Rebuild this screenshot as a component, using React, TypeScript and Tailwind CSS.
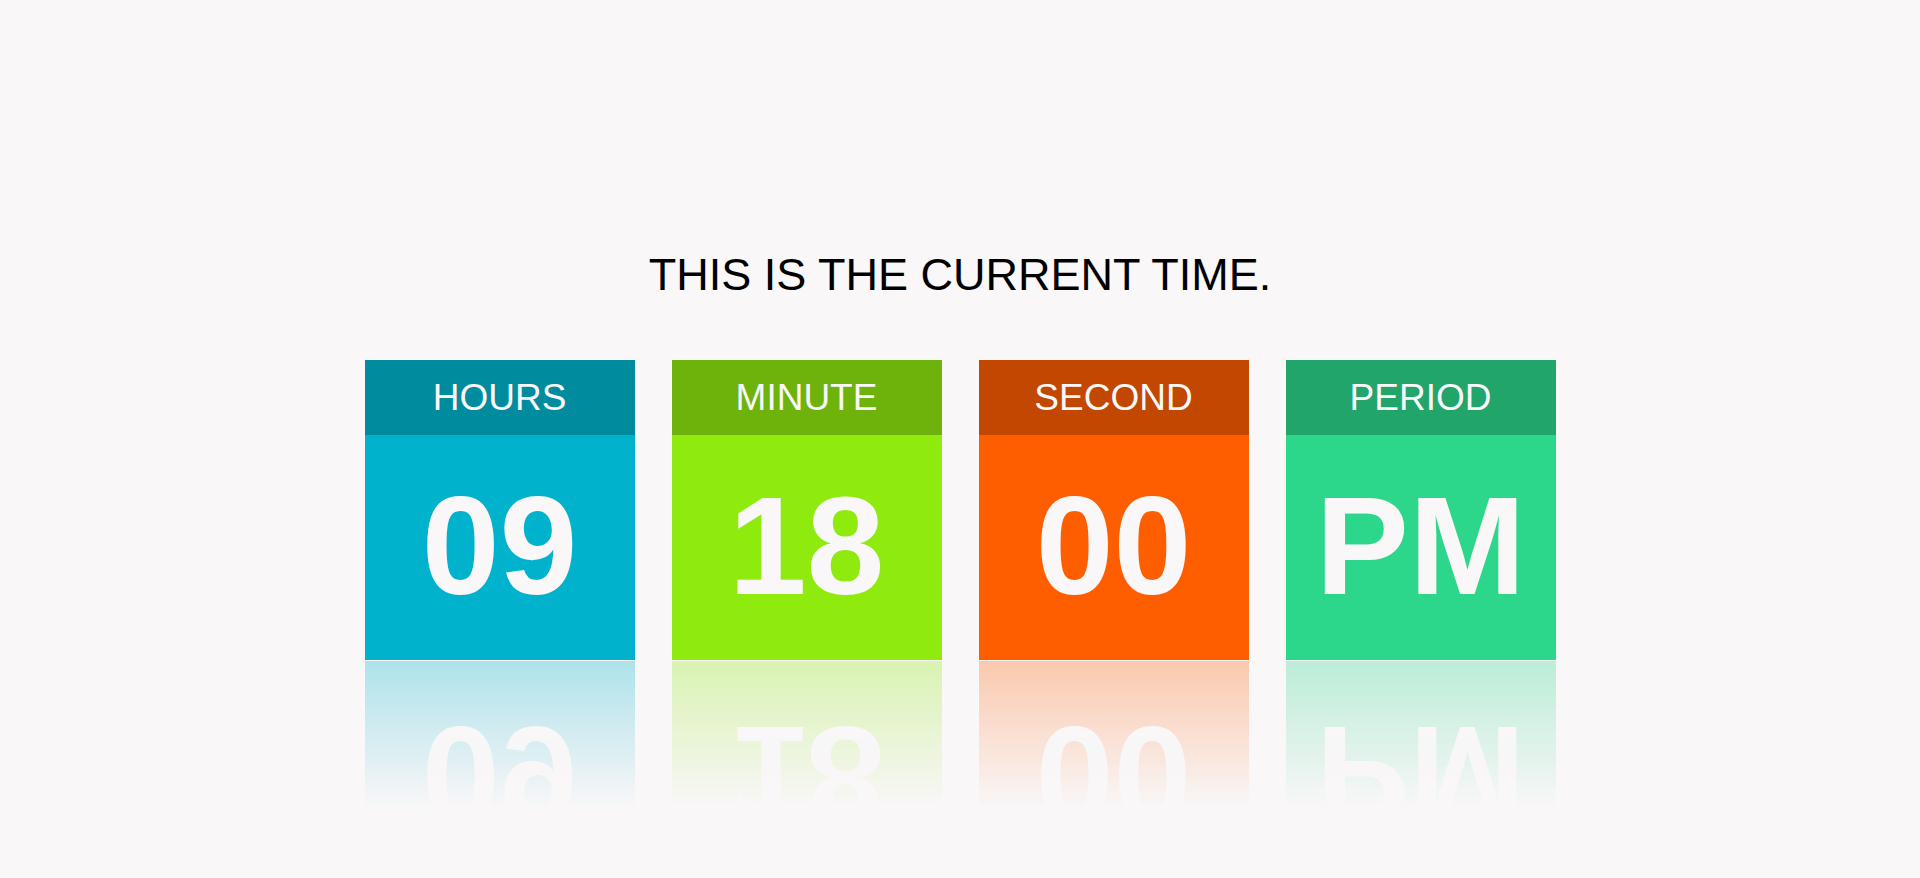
const units = [
  { label: "HOURS", value: "09", head: "bg-[#018b9e]", body: "bg-[#00b2cc]" },
  { label: "MINUTE", value: "18", head: "bg-[#6eb30b]", body: "bg-[#8fea0e]" },
  { label: "SECOND", value: "00", head: "bg-[#c24700]", body: "bg-[#ff5e00]" },
  { label: "PERIOD", value: "PM", head: "bg-[#21a56b]", body: "bg-[#2cd68a]" },
];

function Tile({ label, value, head, body }: (typeof units)[number]) {
  return (
    <div className="flex w-[270px] flex-col">
      <div className={`${head} flex h-[75px] items-center justify-center text-[37px] leading-none text-[#f9f7f8]`}>
        {label}
      </div>
      {/* reflection below the number box, same trick as the original css */}
      <div
        className={`${body} flex h-[225px] items-center justify-center pb-[4px] text-[140px] font-bold leading-none text-[#f9f7f8] [-webkit-box-reflect:below_1px_linear-gradient(transparent_35%,rgba(255,255,255,0.3))]`}
      >
        {value}
      </div>
    </div>
  );
}

export default function App() {
  return (
    <div className="flex h-screen flex-col items-center overflow-hidden bg-[#f9f7f8] pt-[252px] font-['Liberation_Sans',Arial,sans-serif]">
      <h1 className="text-[45px] leading-none text-black">THIS IS THE CURRENT TIME.</h1>
      <div className="mt-[63px] flex gap-[37px]">
        {units.map((u) => (
          <Tile key={u.label} {...u} />
        ))}
      </div>
    </div>
  );
}
